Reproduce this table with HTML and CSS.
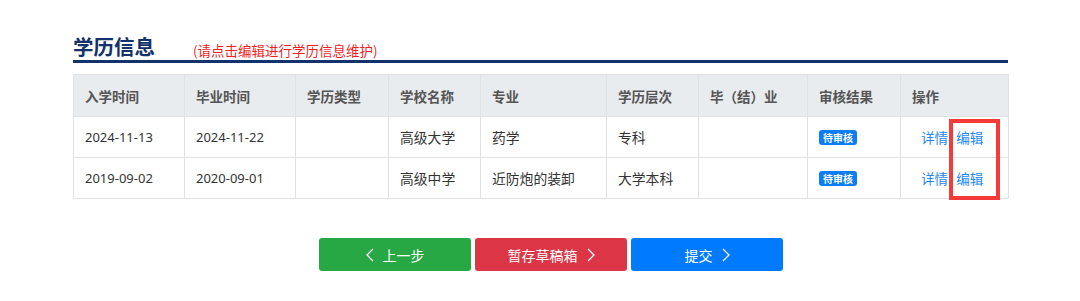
FILE: index.html
```html
<!DOCTYPE html>
<html lang="zh">
<head>
<meta charset="utf-8">
<link rel="stylesheet" href="styles.css">
</head>
<body>
<div class="page">
  <div class="heading">
    <h2 class="title">学历信息</h2>
    <span class="hint">(请点击编辑进行学历信息维护)</span>
  </div>
  <div class="table-wrap">
    <table class="edu">
      <colgroup>
        <col style="width:111px"><col style="width:111px"><col style="width:93px"><col style="width:92px"><col style="width:126px"><col style="width:92px"><col style="width:109px"><col style="width:93px"><col style="width:108px">
      </colgroup>
      <thead>
        <tr><th>入学时间</th><th>毕业时间</th><th>学历类型</th><th>学校名称</th><th>专业</th><th>学历层次</th><th>毕（结）业</th><th>审核结果</th><th>操作</th></tr>
      </thead>
      <tbody>
        <tr><td>2024-11-13</td><td>2024-11-22</td><td></td><td class="cjk">高级大学</td><td class="cjk">药学</td><td class="cjk">专科</td><td></td><td><span class="badge">待审核</span></td><td class="ops"><a>详情</a><a>编辑</a></td></tr>
        <tr><td>2019-09-02</td><td>2020-09-01</td><td></td><td class="cjk">高级中学</td><td class="cjk">近防炮的装卸</td><td class="cjk">大学本科</td><td></td><td><span class="badge">待审核</span></td><td class="ops"><a>详情</a><a>编辑</a></td></tr>
      </tbody>
    </table>
    <div class="mark"></div>
  </div>
  <div class="actions">
    <button class="btn green"><svg class="chev l" viewBox="0 0 8 14" width="8" height="14"><path d="M7 1 L1 7 L7 13" fill="none" stroke="#fff" stroke-width="1.3"/></svg>上一步</button>
    <button class="btn red">暂存草稿箱<svg class="chev r" viewBox="0 0 8 14" width="8" height="14"><path d="M1 1 L7 7 L1 13" fill="none" stroke="#fff" stroke-width="1.3"/></svg></button>
    <button class="btn blue">提交<svg class="chev r" viewBox="0 0 8 14" width="8" height="14"><path d="M1 1 L7 7 L1 13" fill="none" stroke="#fff" stroke-width="1.3"/></svg></button>
  </div>
</div>
</body>
</html>
```
FILE: styles.css
```css
* { box-sizing: border-box; }
body {
  margin: 0;
  background: #fff;
  font-family: "Noto Sans", "Noto Sans CJK SC", sans-serif;
  font-size: 13px;
  color: #333;
}
.page {
  width: 935px;
  margin-left: 73px;
  padding-top: 33px;
}
.heading {
  display: flex;
  align-items: flex-end;
  border-bottom: 3px solid #13316b;
  height: 30px;
}
.title {
  margin: 0;
  font-size: 20.5px;
  font-weight: 700;
  color: #13316b;
  line-height: 28px;
  font-family: "Noto Sans CJK SC", sans-serif;
}
.hint {
  color: #f21f1f;
  font-size: 13.5px;
  margin-left: 38px;
  line-height: 20px;
  font-family: "Noto Sans CJK SC", sans-serif;
}
.table-wrap {
  position: relative;
  margin-top: 11px;
}
.edu {
  width: 935px;
  border-collapse: collapse;
  table-layout: fixed;
}
.edu th, .edu td {
  border: 1px solid #dee2e6;
  text-align: left;
  padding: 0 11px;
  white-space: nowrap;
}
.edu th {
  background: #e9ecef;
  height: 42px;
  font-weight: 600;
  font-size: 13.5px;
  color: #555;
  font-family: "Noto Sans CJK SC", sans-serif;
}
.edu td {
  height: 41px;
}
.edu td.cjk {
  font-size: 13.8px;
  font-family: "Noto Sans CJK SC", sans-serif;
}
.badge {
  display: inline-block;
  background: #0b7df8;
  color: #fff;
  font-size: 10px;
  font-weight: 700;
  line-height: 15px;
  padding: 0 4px;
  border-radius: 3px;
  font-family: "Noto Sans CJK SC", sans-serif;
}
.ops { padding-left: 20px !important; }
.ops a {
  color: #1f88f5;
  font-size: 13.6px;
  margin-right: 8px;
  font-family: "Noto Sans CJK SC", sans-serif;
}
.mark {
  position: absolute;
  left: 876px;
  top: 45px;
  width: 51px;
  height: 81px;
  border: 4px solid #f63a3a;
}
.actions {
  display: flex;
  gap: 4px;
  margin-top: 39px;
  padding-left: 246px;
}
.btn {
  width: 152px;
  height: 33px;
  border: none;
  border-radius: 3px;
  color: #fff;
  font-size: 14px;
  font-family: "Noto Sans CJK SC", sans-serif;
  display: flex;
  align-items: center;
  justify-content: center;
  padding: 0;
}
.green { background: #28a745; }
.red { background: #dc3545; }
.blue { background: #007bff; }
.chev { display: block; }
.chev.l { margin-right: 9px; }
.chev.r { margin-left: 9px; }
```
